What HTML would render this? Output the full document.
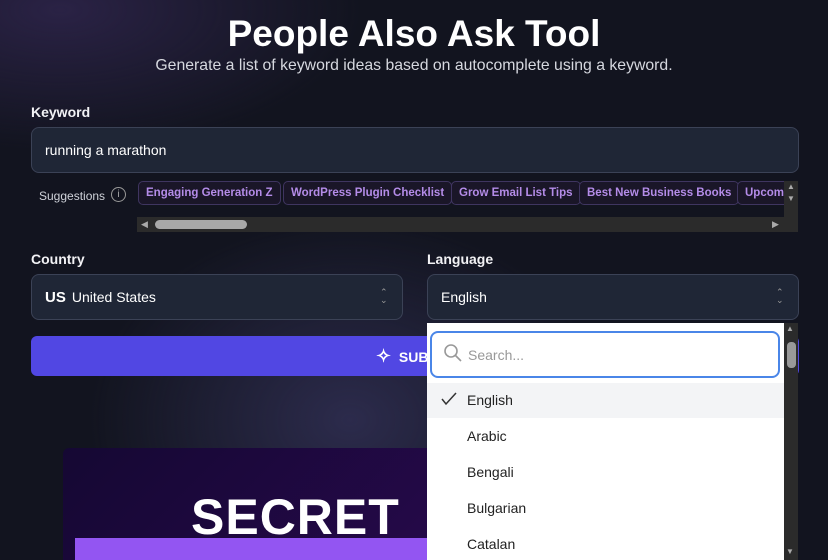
<!DOCTYPE html>
<html><head><style>
*{box-sizing:border-box;margin:0;padding:0}
html,body{width:828px;height:560px;overflow:hidden}
body{font-family:"Liberation Sans",sans-serif;color:#fff;
background:radial-gradient(ellipse 260px 200px at 350px 420px,#2c2b4c 0%,rgba(40,40,70,0) 100%),radial-gradient(ellipse 300px 140px at 60px 10px,#2a2245 0%,rgba(0,0,0,0) 100%),#12141f;position:relative}
.abs{position:absolute}
h1{position:absolute;top:13px;left:0;width:828px;text-align:center;font-size:37px;font-weight:bold}
.sub{top:57px;left:0;width:828px;text-align:center;font-size:15.8px;color:#d6d8df}
.lbl{font-size:14px;font-weight:bold;color:#f2f2f5}
.inp{background:#1f2636;border:1px solid #3b4256;border-radius:8px;font-size:14px;color:#fff;padding-left:13px;display:flex;align-items:center}
.chip{position:absolute;height:24px;border:1px solid #3f3560;background:#1a1628;border-radius:5px;color:#b48ce8;font-size:11.5px;font-weight:bold;padding:0 7px;line-height:22px;white-space:nowrap}
.opt{position:absolute;left:467px;font-size:14px;color:#222}
</style></head><body>
<h1>People Also Ask Tool</h1>
<div class="abs sub">Generate a list of keyword ideas based on autocomplete using a keyword.</div>
<div class="abs lbl" style="left:31px;top:104px">Keyword</div>
<div class="abs inp" style="left:31px;top:127px;width:768px;height:46px">running a marathon</div>
<div class="abs" style="left:39px;top:189px;font-size:12px;color:#cfd2d9">Suggestions</div>
<div class="abs" style="left:111px;top:187px;width:15px;height:15px;border:1px solid #999;border-radius:50%;font-size:10px;color:#aaa;text-align:center;line-height:13px">i</div>
<div class="abs" style="left:137px;top:179px;width:647px;height:38px;overflow:hidden">
<div class="chip" style="left:1px;top:2px">Engaging Generation Z</div>
<div class="chip" style="left:146px;top:2px">WordPress Plugin Checklist</div>
<div class="chip" style="left:314px;top:2px">Grow Email List Tips</div>
<div class="chip" style="left:442px;top:2px">Best New Business Books</div>
<div class="chip" style="left:600px;top:2px">Upcoming</div>
</div>
<div class="abs" style="left:784px;top:181px;width:14px;height:36px;background:#2b2b2b;color:#aaa;font-size:8px;text-align:center;line-height:12px">▲<br>▼</div>
<div class="abs" style="left:137px;top:217px;width:661px;height:15px;background:#2b2b2b"></div>
<div class="abs" style="left:141px;top:219px;color:#aaa;font-size:9px">◀</div>
<div class="abs" style="left:772px;top:219px;color:#aaa;font-size:9px">▶</div>
<div class="abs" style="left:155px;top:220px;width:92px;height:9px;background:#a8a8a8;border-radius:5px"></div>
<div class="abs lbl" style="left:31px;top:251px">Country</div>
<div class="abs inp" style="left:31px;top:274px;width:372px;height:46px"><b style="font-size:15px;margin-right:6px">US</b>United States</div>
<div class="abs" style="left:380px;top:288px;color:#999;font-size:9px;line-height:8px">⌃<br>⌄</div>
<div class="abs lbl" style="left:427px;top:251px">Language</div>
<div class="abs inp" style="left:427px;top:274px;width:372px;height:46px">English</div>
<div class="abs" style="left:776px;top:288px;color:#999;font-size:9px;line-height:8px">⌃<br>⌄</div>
<div class="abs" style="left:31px;top:336px;width:768px;height:40px;background:#5147e3;border-radius:6px;font-size:14px;font-weight:bold;line-height:40px;padding-left:345px"><span style="font-size:18px">✧</span>&nbsp; SUBMIT</div>
<div class="abs" style="left:63px;top:448px;width:380px;height:120px;background:linear-gradient(135deg,#150833,#26094a);border-radius:6px;overflow:hidden">
<div class="abs" style="left:128px;top:40px;font-size:50px;font-weight:bold;letter-spacing:1px">SECRET</div>
<div class="abs" style="left:12px;top:90px;width:380px;height:40px;background:#9355f2"></div>
</div>
<div class="abs" style="left:427px;top:323px;width:357px;height:237px;background:#fff"></div>
<div class="abs" style="left:430px;top:331px;width:350px;height:47px;border:2px solid #4a86e8;border-radius:8px;background:#fff"></div>
<svg class="abs" style="left:443px;top:343px" width="20" height="20" viewBox="0 0 20 20" fill="none" stroke="#999" stroke-width="1.6"><circle cx="8" cy="8" r="6"/><path d="M12.5 12.5L18 18"/></svg>
<div class="abs" style="left:468px;top:347px;font-size:14px;color:#999">Search...</div>
<div class="abs" style="left:427px;top:383px;width:357px;height:35px;background:#f3f4f6"></div>
<svg class="abs" style="left:441px;top:392px" width="16" height="14" viewBox="0 0 16 14" fill="none" stroke="#333" stroke-width="1.5"><path d="M1 7l4 5L15 1"/></svg>
<div class="opt" style="top:392px">English</div>
<div class="opt" style="top:428px">Arabic</div>
<div class="opt" style="top:464px">Bengali</div>
<div class="opt" style="top:500px">Bulgarian</div>
<div class="opt" style="top:536px">Catalan</div>
<div class="abs" style="left:784px;top:323px;width:14px;height:237px;background:#2b2b2b"></div>
<div class="abs" style="left:786px;top:324px;color:#aaa;font-size:8px">▲</div>
<div class="abs" style="left:786px;top:547px;color:#aaa;font-size:8px">▼</div>
<div class="abs" style="left:787px;top:342px;width:9px;height:26px;background:#999;border-radius:4px"></div>
</body></html>
